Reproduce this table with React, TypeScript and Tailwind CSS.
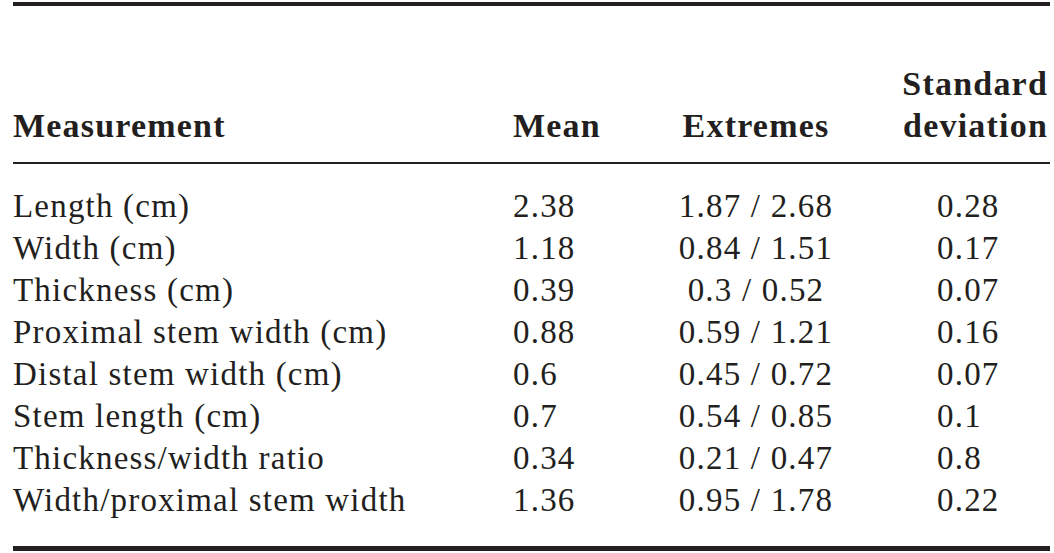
const rows: [string, string, string, string][] = [
  ['Length (cm)', '2.38', '1.87 / 2.68', '0.28'],
  ['Width (cm)', '1.18', '0.84 / 1.51', '0.17'],
  ['Thickness (cm)', '0.39', '0.3 / 0.52', '0.07'],
  ['Proximal stem width (cm)', '0.88', '0.59 / 1.21', '0.16'],
  ['Distal stem width (cm)', '0.6', '0.45 / 0.72', '0.07'],
  ['Stem length (cm)', '0.7', '0.54 / 0.85', '0.1'],
  ['Thickness/width ratio', '0.34', '0.21 / 0.47', '0.8'],
  ['Width/proximal stem width', '1.36', '0.95 / 1.78', '0.22'],
];

export default function App() {
  return (
    <div className="w-[1054px] h-[553px] bg-white pt-[2px] pl-[13px] pr-[4px] font-['Liberation_Serif',serif] text-[#231f20]">
      <div className="border-t-[4px] border-[#231f20]">
        {/* header */}
        <div className="grid grid-cols-[500px_150px_186px_201px] items-end pt-[57px] pb-[15px] text-[34px] leading-[42px] font-bold tracking-[1.2px]">
          <div>Measurement</div>
          <div>Mean</div>
          <div className="text-center">Extremes</div>
          <div className="text-right pr-[2px]">
            <div>Standard</div>
            <div>deviation</div>
          </div>
        </div>
        <div className="border-t-[2px] border-[#231f20]" />
        {/* body */}
        <div className="pt-[21px] pb-[25px] text-[33px] leading-[42px] tracking-[1.2px]">
          {rows.map(([label, mean, ext, sd]) => (
            <div key={label} className="grid grid-cols-[500px_150px_186px_201px]">
              <div className="whitespace-nowrap">{label}</div>
              <div>{mean}</div>
              <div className="text-center whitespace-nowrap">{ext}</div>
              <div className="pl-[88px]">{sd}</div>
            </div>
          ))}
        </div>
        <div className="border-t-[5px] border-[#231f20]" />
      </div>
    </div>
  );
}
